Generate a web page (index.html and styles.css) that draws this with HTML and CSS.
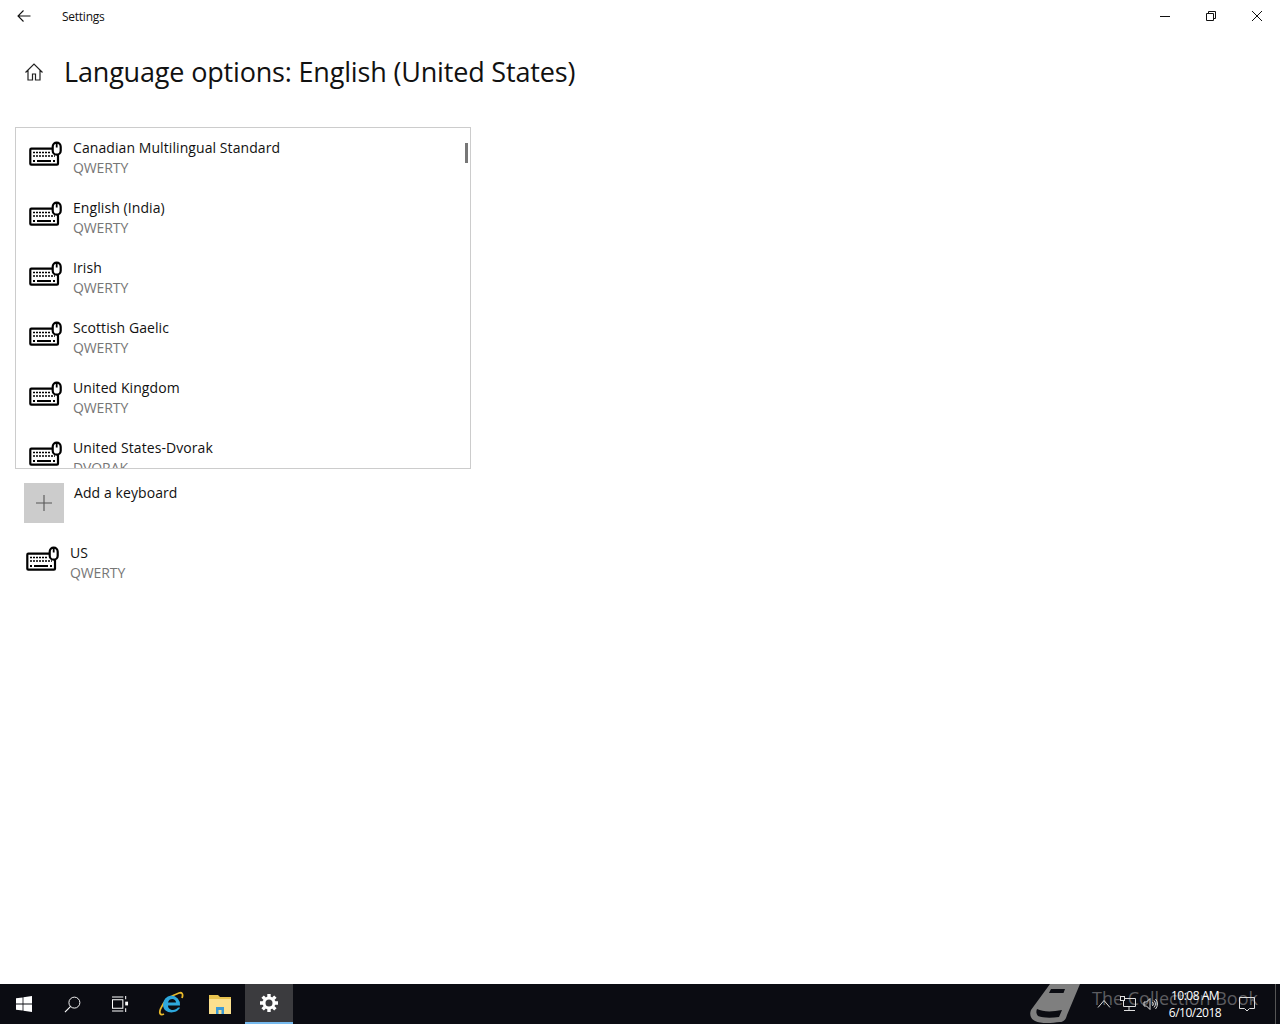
FILE: index.html
```html
<!DOCTYPE html>
<html lang="en">
<head>
<meta charset="utf-8">
<title>Settings</title>
<link rel="stylesheet" href="styles.css">
</head>
<body>
<svg class="defs" width="0" height="0" aria-hidden="true">
  <symbol id="kbd" viewBox="0 0 34 26">
    <path d="M25 7.700H3.300a1 1 0 0 0-1 1v14a1 1 0 0 0 1 1H29a1 1 0 0 0 1-1V14" fill="none" stroke="#000" stroke-width="2.200"/>
    <rect x="24.700" y="1.700" width="8" height="12" rx="4" fill="#fff" stroke="#000" stroke-width="2.200"/>
    <path d="M28.700 2v4.500" stroke="#000" stroke-width="1.800"/>
    <path d="M5 11.500h18" fill="none" stroke="#000" stroke-width="1.700" stroke-dasharray="2 1"/>
    <path d="M5 15h22" fill="none" stroke="#000" stroke-width="1.700" stroke-dasharray="2 1"/>
    <path d="M5 20h2M9 20h14M25 20h2" fill="none" stroke="#000" stroke-width="1.900"/>
  </symbol>
</svg>
<div class="app">
  <header class="titlebar">
    <span class="back">
      <svg width="16" height="16" viewBox="0 0 16 16"><path d="M14.500 8H2M7.500 2.500 2 8l5.500 5.500" fill="none" stroke="#111" stroke-width="1.100"/></svg>
    </span>
    <span class="apptitle">Settings</span>
    <div class="winctl">
      <span class="winbtn"><svg width="12" height="12" viewBox="0 0 12 12"><path d="M1 6.500h10" stroke="#111" stroke-width="1"/></svg></span>
      <span class="winbtn"><svg width="12" height="12" viewBox="0 0 12 12"><path d="M1.500 3.500h7v7h-7zM3.500 3.500v-2h7v7h-2" fill="none" stroke="#111" stroke-width="1"/></svg></span>
      <span class="winbtn"><svg width="12" height="12" viewBox="0 0 12 12"><path d="M1 1l10 10M11 1 1 11" stroke="#111" stroke-width="1"/></svg></span>
    </div>
  </header>
  <main class="content">
    <div class="heading">
      <svg class="home" width="20" height="20" viewBox="0 0 20 20"><path d="M1.500 10.500 10 2l8.500 8.500M4 8.500V18h4.500v-6h3v6H16V8.500" fill="none" stroke="#222" stroke-width="1.200"/></svg>
      <h1>Language options: English (United States)</h1>
    </div>
    <div class="listbox">
      <div class="kbrow"><svg class="kicon"><use href="#kbd"/></svg><div><div class="name">Canadian Multilingual Standard</div><div class="sub">QWERTY</div></div></div>
      <div class="kbrow"><svg class="kicon"><use href="#kbd"/></svg><div><div class="name">English (India)</div><div class="sub">QWERTY</div></div></div>
      <div class="kbrow"><svg class="kicon"><use href="#kbd"/></svg><div><div class="name">Irish</div><div class="sub">QWERTY</div></div></div>
      <div class="kbrow"><svg class="kicon"><use href="#kbd"/></svg><div><div class="name">Scottish Gaelic</div><div class="sub">QWERTY</div></div></div>
      <div class="kbrow"><svg class="kicon"><use href="#kbd"/></svg><div><div class="name">United Kingdom</div><div class="sub">QWERTY</div></div></div>
      <div class="kbrow"><svg class="kicon"><use href="#kbd"/></svg><div><div class="name">United States-Dvorak</div><div class="sub">DVORAK</div></div></div>
      <span class="thumb"></span>
    </div>
    <div class="addrow">
      <span class="plus"><svg width="16" height="16" viewBox="0 0 16 16"><path d="M8 0v16M0 8h16" stroke="#555" stroke-width="1.100"/></svg></span>
      <span class="addlabel">Add a keyboard</span>
    </div>
    <div class="kbrow current"><svg class="kicon"><use href="#kbd"/></svg><div><div class="name">US</div><div class="sub">QWERTY</div></div></div>
  </main>
  <footer class="taskbar">
    <span class="tb">
      <svg width="16" height="16" viewBox="0 0 16 16"><path d="M0 2.300 6.600 1.400v6.200H0zM7.400 1.300 16 0v7.600H7.400zM0 8.400h6.600v6.200L0 13.700zM7.400 8.400H16V16l-8.600-1.300z" fill="#fff"/></svg>
    </span>
    <span class="tb">
      <svg width="17" height="17" viewBox="0 0 18 18"><circle cx="11" cy="7" r="5.800" fill="none" stroke="#fff" stroke-width="1"/><path d="M7 11 1 17" stroke="#fff" stroke-width="1.200"/></svg>
    </span>
    <span class="tb">
      <svg width="17" height="16" viewBox="0 0 18 17"><path d="M.500 4h11v9H.500zM0 1h12M0 16h12M14.500 0v3.500M14.500 13v4" fill="none" stroke="#fff" stroke-width="1.100"/><rect x="14" y="6" width="3" height="4" fill="#fff"/></svg>
    </span>
    <span class="tb ie">
      <svg width="26" height="26" viewBox="0 0 26 26">
        <path d="M6 23C2 25 1 22 2.500 18 5 11 12 5 21 2c3-1 4.500 1 3 5" fill="none" stroke="#e8b92a" stroke-width="1.800"/>
        <path d="M13 4.500a9 9 0 0 1 9 10H10c0 5 7 6 10 2h2c-3 7-17 7-17-3a9 9 0 0 1 8-9zm-3 7h8c0-4.500-7-5-8 0z" fill="#2ea8dc" fill-rule="evenodd"/>
      </svg>
    </span>
    <span class="tb">
      <svg width="22" height="19" viewBox="0 0 22 19"><path d="M0 0h9l2 2h11v3H0z" fill="#e8c34f"/><path d="M0 4h22v15H0z" fill="#fbe08e"/><path d="M7 19v-7h8v7h-2.500v-4h-3v4z" fill="#3b9bd6"/></svg>
    </span>
    <span class="tb active">
      <svg width="20" height="20" viewBox="0 0 20 20"><circle cx="10" cy="10" r="5" fill="none" stroke="#fff" stroke-width="3"/><path d="M10 1v3M10 16v3M1 10h3M16 10h3M3.600 3.600l2.200 2.200M14.200 14.200l2.200 2.200M3.600 16.400l2.200-2.200M14.200 5.800l2.200-2.200" stroke="#fff" stroke-width="3.400"/></svg>
    </span>
    <div class="watermark">
      <svg class="book" width="50" height="40" viewBox="0 0 50 40"><path d="M20 0H50L37 31c-1 4-3 7-7 7-8 1-19 2-25-1C1 35-1 31 1 26z" fill="#7f7f7f"/><path d="M7 25c6 3 15 3 25 1L29 33c-8 1-16 1-21-1-2-2-2-5-1-7z" fill="#0b0c12"/><path d="M21 5h14l-1.500 4H19z" fill="#0b0c12"/></svg>
      <span>The Collection Book</span>
    </div>
    <div class="tray">
      <svg class="tray-a" width="14" height="10" viewBox="0 0 14 10"><path d="M1 8.500 7 1.500l6 7" fill="none" stroke="#ddd" stroke-width="1"/></svg>
      <svg class="tray-n" width="16" height="16" viewBox="0 0 16 16"><path d="M3.500 2.500h12v8h-12zM9 10.500V14M4 14.500h11" fill="none" stroke="#ddd" stroke-width="1"/><rect x="0.500" y="0.500" width="4" height="4" fill="#0b0c12" stroke="#ddd"/></svg>
      <svg class="tray-s" width="16" height="16" viewBox="0 0 16 16"><path d="M1 6h2.500L7 2.500v11L3.500 10H1zM9.500 6a3 3 0 0 1 0 4M11 4.500a5 5 0 0 1 0 7M12.500 3a7.500 7.500 0 0 1 0 10" fill="none" stroke="#ddd" stroke-width="1"/></svg>
      <div class="clock"><div>10:08 AM</div><div>6/10/2018</div></div>
      <svg class="notif" width="16" height="16" viewBox="0 0 16 16"><path d="M.500 1.500h15v11h-5l-2.500 2.500-2.500-2.500h-5z" fill="none" stroke="#ddd" stroke-width="1"/></svg>
      <span class="showdesk"></span>
    </div>
  </footer>
</div>
</body>
</html>
```

FILE: styles.css
```css
* { box-sizing: border-box; }
html, body { margin: 0; height: 100%; }
body { font-family: "Open Sans", "Noto Sans", sans-serif; color: #000; background: #fff; overflow: hidden; }
.defs { position: absolute; }
.app { display: flex; flex-direction: column; height: 1024px; }

.titlebar { display: flex; align-items: center; height: 32px; flex: none; }
.back { display: flex; width: 48px; justify-content: center; }
.apptitle { font-size: 12px; margin-left: 14px; color: #111; letter-spacing: -.25px; }
.winctl { display: flex; margin-left: auto; }
.winbtn { display: flex; width: 46px; height: 32px; align-items: center; justify-content: center; }

.content { flex: 1; padding: 0 0 0 15px; min-height: 0; }
.heading { display: flex; align-items: center; height: 40px; margin-top: 20px; padding-left: 9px; }
.home { flex: none; }
.heading h1 { font-size: 27px; font-weight: 400; margin: 0 0 0 20px; line-height: 40px; white-space: nowrap; letter-spacing: -.175px; color: #111; }

.listbox { position: relative; width: 456px; height: 342px; margin-top: 35px; padding-top: 10px; border: 1px solid #ccc; overflow: hidden; }
.thumb { position: absolute; right: 2px; top: 15px; width: 3px; height: 20px; background: #777; }
.kbrow { display: flex; height: 60px; padding-left: 12px; }
.kicon { width: 34px; height: 26px; flex: none; margin-top: 3px; margin-right: 11px; }
.name { font-size: 14px; line-height: 20px; color: #111; white-space: nowrap; letter-spacing: .08px; }
.sub { font-size: 14px; line-height: 20px; color: #767676; white-space: nowrap; letter-spacing: -.1px; }

.addrow { display: flex; margin: 14px 0 0 9px; height: 40px; }
.plus { display: flex; width: 40px; height: 40px; align-items: center; justify-content: center; background: #ccc; }
.addlabel { font-size: 14px; line-height: 20px; margin-left: 10px; color: #111; letter-spacing: .08px; }

.current { margin-top: 20px; padding-left: 10px; }

.taskbar { position: relative; display: flex; align-items: stretch; height: 40px; flex: none; background: #0b0c12; }
.tb { display: flex; width: 48px; align-items: center; justify-content: center; }
.ie { margin: 0 1px 0 3px; }
.tb.active { background: #3b3b3e; border-bottom: 2px solid #76b9ed; margin-left: 1px; }

.tray { position: relative; z-index: 1; display: flex; align-items: center; margin-left: auto; }
.tray-a { margin-right: 9px; }
.tray-n { margin-right: 7px; }
.tray-s { margin-right: 1px; }
.clock { width: 70px; color: #fff; font-size: 12px; line-height: 17px; text-align: center; letter-spacing: -.5px; }
.notif { margin: 0 25px 0 9px; }
.showdesk { position: absolute; right: 4px; top: 0; bottom: 0; width: 1px; background: #555; }

.watermark { position: absolute; left: 1030px; top: 0; display: flex; align-items: center; height: 40px; gap: 12px; color: #5c5c60; font-size: 18px; white-space: nowrap; }
.watermark span { margin-bottom: 12px; }
.book { flex: none; }
```
